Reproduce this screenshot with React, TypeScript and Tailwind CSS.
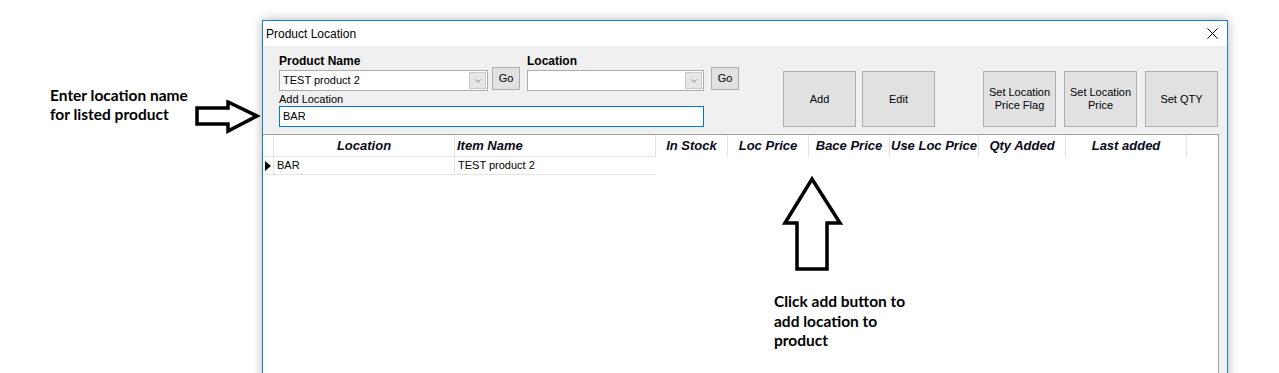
import { ChevronDown } from "lucide-react"

const ui = { fontFamily: '"Liberation Sans", Arial, sans-serif' }
const note = { fontFamily: 'Lato, "Liberation Sans", sans-serif' }

const columns = [
  { name: "Location", w: 181, left: false, line: true },
  { name: "Item Name", w: 201, left: true, line: true },
  { name: "In Stock", w: 72, left: false, line: false },
  { name: "Loc Price", w: 81, left: false, line: false },
  { name: "Bace Price", w: 81, left: false, line: false },
  { name: "Use Loc Price", w: 89, left: false, line: false },
  { name: "Qty Added", w: 87, left: false, line: false },
  { name: "Last added", w: 121, left: false, line: false }
]

function Combo({ width, value }: { width: number; value: string }) {
  return (
    <div
      className="flex h-[21px] items-center border border-[#acacac] bg-white"
      style={{ width }}>
      <span className="flex-1 pl-[3px] text-[11px] text-black">{value}</span>
      <div className="mr-[1px] flex h-[17px] w-[17px] items-center justify-center border border-[#c9c9c9] bg-[#e6e6e6]">
        <ChevronDown size={10} strokeWidth={1.5} className="text-[#404040]" />
      </div>
    </div>
  )
}

function GoButton() {
  return (
    <button className="flex h-[23px] w-[28px] items-center justify-center border border-[#adadad] bg-[#e1e1e1] text-[11px] text-black">
      Go
    </button>
  )
}

function BigButton({ children, ml }: { children: React.ReactNode; ml: string }) {
  return (
    <button
      className={`${ml} flex h-[56px] w-[73px] items-center justify-center border border-[#adadad] bg-[#e1e1e1] text-center text-[11px] leading-[13px] text-black`}>
      {children}
    </button>
  )
}

function ProductLocationWindow() {
  return (
    <div
      className="absolute left-[262px] top-[20px] flex h-[370px] w-[966px] flex-col border border-[#1a7fd4] bg-[#f0f0f0] shadow-[0_0_10px_rgba(0,0,0,0.3)]"
      style={ui}>
      {/* title bar */}
      <div className="flex h-[25px] items-center justify-between bg-white pl-[3px] pr-[9px]">
        <span className="text-[12px] text-black">Product Location</span>
        <svg width="11" height="11" viewBox="0 0 11 11">
          <path d="M0.5 0.5 L10.5 10.5 M10.5 0.5 L0.5 10.5" stroke="#000" strokeWidth="1" />
        </svg>
      </div>

      {/* form area */}
      <div className="flex h-[88px]">
        <div className="flex flex-col pl-[16px] pt-[8px]">
          <div className="flex">
            <div className="flex flex-col">
              <span className="h-[14px] text-[12px] font-bold leading-[14px] text-black">Product Name</span>
              <div className="mt-[2px] flex items-start">
                <Combo width={209} value="TEST product 2" />
                <div className="ml-[4px] -mt-[3px]">
                  <GoButton />
                </div>
              </div>
            </div>
            <div className="ml-[7px] flex flex-col">
              <span className="h-[14px] text-[12px] font-bold leading-[14px] text-black">Location</span>
              <div className="mt-[2px] flex items-start">
                <Combo width={177} value="" />
                <div className="ml-[7px] -mt-[3px]">
                  <GoButton />
                </div>
              </div>
            </div>
          </div>
          <span className="mt-[2px] h-[13px] text-[11px] leading-[13px] text-black">Add Location</span>
          <div className="flex h-[21px] w-[425px] items-center border border-[#0078d7] bg-white pl-[3px] text-[11px] text-black">
            BAR
          </div>
        </div>

        <div className="ml-[44px] flex items-start pt-[25px]">
          <BigButton ml="ml-0">Add</BigButton>
          <BigButton ml="ml-[6px]">Edit</BigButton>
          <BigButton ml="ml-[48px]">
            Set Location
            <br />
            Price Flag
          </BigButton>
          <BigButton ml="ml-[8px]">
            Set Location
            <br />
            Price
          </BigButton>
          <BigButton ml="ml-[8px]">Set QTY</BigButton>
        </div>
      </div>

      {/* grid */}
      <div className="flex-1 w-[956px] border-t border-r border-[#a0a0a0] bg-white">
        <div className="flex h-[22px]">
          <div className="w-[11px] border-r border-b border-[#e3e3e3]" />
          {columns.map((c) => (
            <div
              key={c.name}
              className={`flex items-center border-r border-[#e3e3e3] text-[13px] font-bold italic text-[#0a0a1a] ${
                c.line ? "border-b" : ""
              } ${c.left ? "justify-start pl-[2px]" : "justify-center"}`}
              style={{ width: c.w }}>
              {c.name}
            </div>
          ))}
        </div>
        <div className="flex h-[18px] text-[11px] text-black">
          <div className="flex w-[11px] items-center justify-center border-r border-b border-[#e3e3e3]">
            <svg width="6" height="10" viewBox="0 0 6 10">
              <path d="M0 0 L6 5 L0 10 Z" fill="#000" />
            </svg>
          </div>
          <div className="flex w-[181px] items-center border-r border-b border-[#e3e3e3] pl-[3px]">BAR</div>
          <div className="flex w-[201px] items-center border-b border-[#e3e3e3] pl-[3px]">TEST product 2</div>
        </div>
      </div>
    </div>
  )
}

export default function App() {
  return (
    <div className="relative h-[373px] w-[1279px] overflow-hidden bg-white">
      {/* left note */}
      <div className="absolute left-[50px] top-[86px] text-[15.5px] font-bold leading-[19px] text-black" style={note}>
        Enter location name
        <br />
        for listed product
      </div>
      <svg className="absolute left-[195px] top-[100px]" width="66" height="36" viewBox="0 0 66 36">
        <path
          d="M2 8 L33 8 L33 2 L62 16 L33 31 L33 24 L2 24 Z"
          fill="#fff"
          stroke="#000"
          strokeWidth="3.5"
          strokeLinejoin="miter"
        />
      </svg>

      <ProductLocationWindow />

      {/* bottom note */}
      <svg className="absolute left-[782px] top-[176px]" width="62" height="97" viewBox="0 0 62 97">
        <path
          d="M30 3 L58 47 L45 47 L45 93 L15 93 L15 47 L3 47 Z"
          fill="#fff"
          stroke="#000"
          strokeWidth="3.5"
        />
      </svg>
      <div className="absolute left-[774px] top-[292px] text-[15.5px] font-bold leading-[19.5px] text-black" style={note}>
        Click add button to
        <br />
        add location to
        <br />
        product
      </div>
    </div>
  )
}
